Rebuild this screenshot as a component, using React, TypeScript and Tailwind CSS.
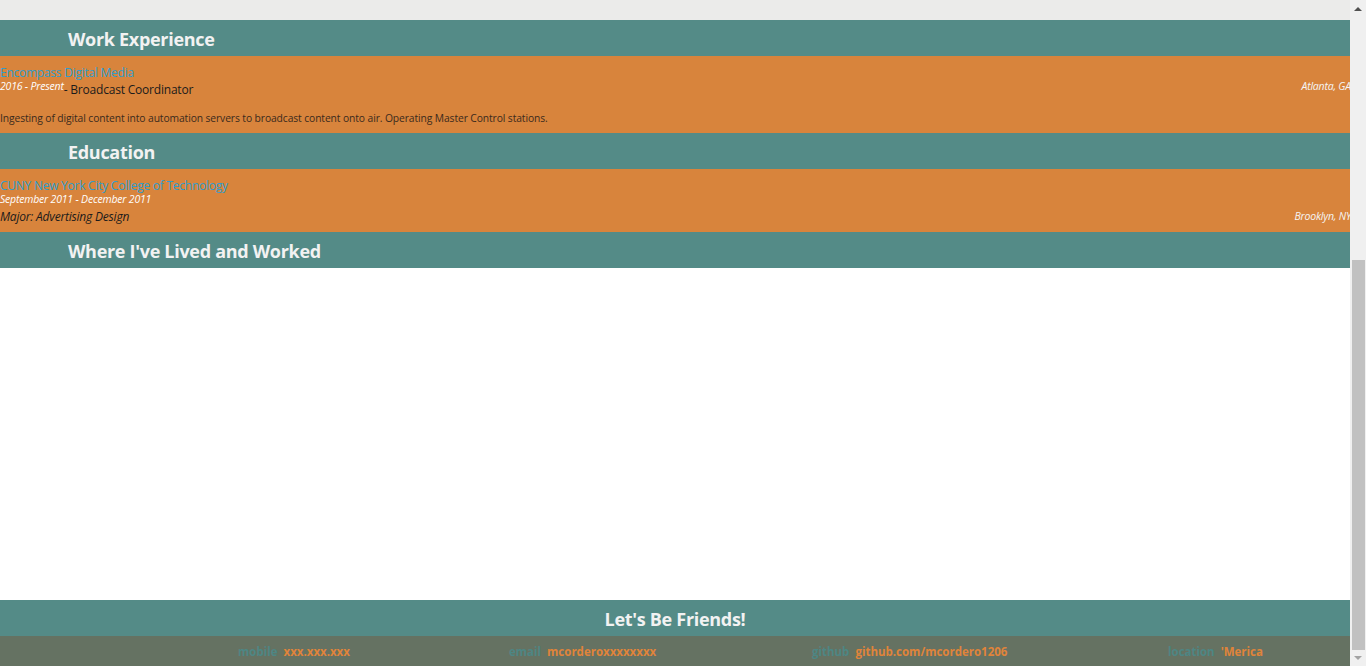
const font = { fontFamily: '"Open Sans", "Noto Sans", sans-serif' };

const SectionHeader = ({ title }: { title: string }) => (
  <div className="h-[36px] bg-[#548b87] flex items-center pl-[68px] pt-[2px]">
    <h2 className="text-[18px] font-bold text-[#f2f2f2] tracking-[-0.3px]">{title}</h2>
  </div>
);

const FooterItem = ({ label, value, width }: { label: string; value: string; width: string }) => (
  <div className={`flex items-center gap-[6px] ${width}`}>
    <span className="text-[11.5px] font-bold text-[#4d8684]">{label}</span>
    <span className="text-[11.5px] font-bold text-[#e0843a]">{value}</span>
  </div>
);

export default function App() {
  return (
    <div className="flex h-[666px] w-[1366px] overflow-hidden" style={font}>
      <div className="flex-1 flex flex-col">
        <div className="h-[20px] bg-[#ebebea]" />

        <SectionHeader title="Work Experience" />
        <div className="h-[77px] bg-[#d8843c] pt-[10px] overflow-hidden">
          <div className="text-[12px] leading-[14px] text-[#2f9dcc] tracking-[-0.25px]">Encompass Digital Media</div>
          <div className="flex items-start">
            <span className="text-[10.5px] leading-[12px] italic text-white tracking-[-0.2px]">2016 - Present</span>
            <span className="mt-[1px] text-[12px] leading-[18px] text-[#1b1b1b] tracking-[-0.2px]">- Broadcast Coordinator</span>
            <span className="ml-auto text-[10.5px] leading-[12px] italic text-[#f5f5f5] whitespace-nowrap tracking-[-0.2px] mr-[-1px]">Atlanta, GA</span>
          </div>
          <p className="mt-[13px] text-[10.3px] leading-[12px] text-[#3a2a1d] tracking-[-0.1px]">
            Ingesting of digital content into automation servers to broadcast content onto air. Operating Master Control stations.
          </p>
        </div>

        <SectionHeader title="Education" />
        <div className="h-[63px] bg-[#d8843c] pt-[10px] overflow-hidden">
          <div className="text-[12px] leading-[14px] text-[#2f9dcc] tracking-[-0.25px]">CUNY New York City College of Technology</div>
          <div className="text-[10.5px] leading-[13px] italic text-white tracking-[-0.2px]">September 2011 - December 2011</div>
          <div className="flex items-end mt-[3px]">
            <span className="text-[12px] leading-[16px] italic text-[#1b1b1b] tracking-[-0.2px]">Major: Advertising Design</span>
            <span className="ml-auto mb-[3px] text-[10.5px] leading-[12px] italic text-[#f5f5f5] whitespace-nowrap tracking-[-0.2px] mr-[-1px]">Brooklyn, NY</span>
          </div>
        </div>

        <SectionHeader title="Where I've Lived and Worked" />
        <div className="h-[332px] bg-white" />

        <div className="h-[36px] bg-[#548b87] flex items-center justify-center pt-[2px]">
          <h2 className="text-[18px] font-bold text-[#f2f2f2] tracking-[-0.3px]">Let's Be Friends!</h2>
        </div>
        <div className="h-[30px] bg-[#657262] flex items-center pl-[238px] pt-[2px]">
          <FooterItem label="mobile" value="xxx.xxx.xxx" width="w-[271px]" />
          <FooterItem label="email" value="mcorderoxxxxxxxx" width="w-[303px]" />
          <FooterItem label="github" value="github.com/mcordero1206" width="w-[356px]" />
          <FooterItem label="location" value="'Merica" width="" />
        </div>
      </div>

      <div className="w-[16px] bg-[#f0f0f0] flex flex-col items-center">
        <div className="h-[17px] flex items-center justify-center">
          <div className="w-0 h-0 border-l-[4px] border-r-[4px] border-b-[4px] border-l-transparent border-r-transparent border-b-[#505050]" />
        </div>
        <div className="mt-[243px] w-[13px] h-[390px] bg-[#c1c1c1]" />
        <div className="h-[16px] flex items-center justify-center">
          <div className="w-0 h-0 border-l-[4px] border-r-[4px] border-t-[4px] border-l-transparent border-r-transparent border-t-[#a3a3a3]" />
        </div>
      </div>
    </div>
  );
}
